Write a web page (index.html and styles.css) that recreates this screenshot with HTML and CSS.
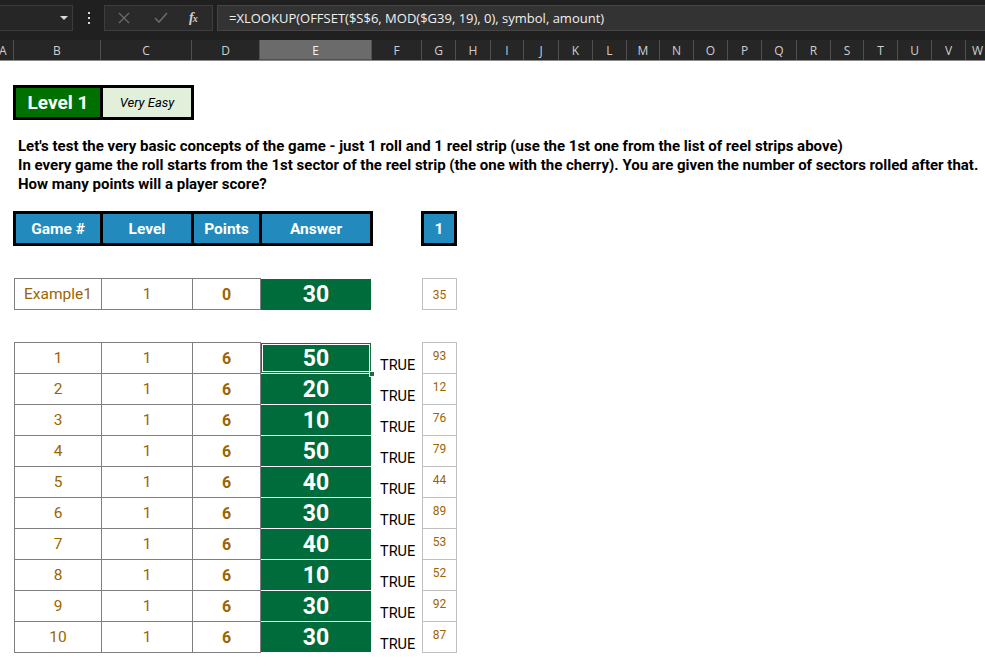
FILE: index.html
```html
<!DOCTYPE html>
<html>
<head>
<meta charset="utf-8">
<link rel="stylesheet" href="styles.css">
</head>
<body>
<div class="app">
  <div class="topbar">
    <div class="namebox"><span class="caret"></span></div>
    <div class="dots"><svg width="4" height="12" viewBox="0 0 4 12"><rect x="1" y="0" width="2" height="2" fill="#d8d8d8"/><rect x="1" y="5" width="2" height="2" fill="#d8d8d8"/><rect x="1" y="10" width="2" height="2" fill="#d8d8d8"/></svg></div>
    <div class="fxbox">
      <svg class="ic" width="14" height="14" viewBox="0 0 14 14"><path d="M2 2 L12 12 M12 2 L2 12" stroke="#6a6a6a" stroke-width="1.4" fill="none"/></svg>
      <svg class="ic" width="16" height="14" viewBox="0 0 16 14"><path d="M2 7 L6 11 L14 2" stroke="#6a6a6a" stroke-width="1.6" fill="none"/></svg>
      <span class="fx">f<sub>x</sub></span>
    </div>
    <div class="formula">=XLOOKUP(OFFSET($S$6, MOD($G39, 19), 0), symbol, amount)</div>
  </div>
  <div class="colheads">
    <span class="ch cha" style="width:14px">A</span>
    <span class="ch" style="width:87px">B</span>
    <span class="ch" style="width:91px">C</span>
    <span class="ch" style="width:68px">D</span>
    <span class="ch sel" style="width:112px">E</span>
    <span class="ch" style="width:50px">F</span>
    <span class="ch" style="width:34px">G</span>
    <span class="ch" style="width:35px">H</span>
    <span class="ch" style="width:33px">I</span>
    <span class="ch" style="width:35px">J</span>
    <span class="ch" style="width:34px">K</span>
    <span class="ch" style="width:34px">L</span>
    <span class="ch" style="width:33px">M</span>
    <span class="ch" style="width:34px">N</span>
    <span class="ch" style="width:34px">O</span>
    <span class="ch" style="width:34px">P</span>
    <span class="ch" style="width:35px">Q</span>
    <span class="ch" style="width:34px">R</span>
    <span class="ch" style="width:33px">S</span>
    <span class="ch" style="width:34px">T</span>
    <span class="ch" style="width:34px">U</span>
    <span class="ch" style="width:34px">V</span>
    <span class="ch chw" style="width:40px">W</span>
  </div>
  <div class="sheet">
    <div class="levelbox">
      <div class="lvl">Level 1</div>
      <div class="easy">Very Easy</div>
    </div>
    <p class="intro">Let's test the very basic concepts of the game - just 1 roll and 1 reel strip (use the 1st one from the list of reel strips above)<br>In every game the roll starts from the 1st sector of the reel strip (the one with the cherry). You are given the number of sectors rolled after that.<br>How many points will a player score?</p>
    <div class="headrow">
      <div class="hbox">
        <div class="hc w1">Game #</div>
        <div class="hc w2">Level</div>
        <div class="hc w3">Points</div>
        <div class="hc w4">Answer</div>
      </div>
      <div class="hbox one"><div class="hc w5">1</div></div>
    </div>
    <div class="exrow">
      <div class="grid ex">
        <div class="c b">Example1</div>
        <div class="c">1</div>
        <div class="c d bold">0</div>
        <div class="ans">30</div>
        <div class="tf"></div>
        <div class="g">35</div>
      </div>
    </div>
    <div class="grid data">
      <div class="c b">1</div><div class="c">1</div><div class="c d bold">6</div><div class="ans selcell">50<span class="handle"></span></div><div class="tf">TRUE</div><div class="g">93</div>
      <div class="c b">2</div><div class="c">1</div><div class="c d bold">6</div><div class="ans">20</div><div class="tf">TRUE</div><div class="g">12</div>
      <div class="c b">3</div><div class="c">1</div><div class="c d bold">6</div><div class="ans">10</div><div class="tf">TRUE</div><div class="g">76</div>
      <div class="c b">4</div><div class="c">1</div><div class="c d bold">6</div><div class="ans">50</div><div class="tf">TRUE</div><div class="g">79</div>
      <div class="c b">5</div><div class="c">1</div><div class="c d bold">6</div><div class="ans">40</div><div class="tf">TRUE</div><div class="g">44</div>
      <div class="c b">6</div><div class="c">1</div><div class="c d bold">6</div><div class="ans">30</div><div class="tf">TRUE</div><div class="g">89</div>
      <div class="c b">7</div><div class="c">1</div><div class="c d bold">6</div><div class="ans">40</div><div class="tf">TRUE</div><div class="g">53</div>
      <div class="c b">8</div><div class="c">1</div><div class="c d bold">6</div><div class="ans">10</div><div class="tf">TRUE</div><div class="g">52</div>
      <div class="c b">9</div><div class="c">1</div><div class="c d bold">6</div><div class="ans">30</div><div class="tf">TRUE</div><div class="g">92</div>
      <div class="c b">10</div><div class="c">1</div><div class="c d bold">6</div><div class="ans">30</div><div class="tf">TRUE</div><div class="g">87</div>
    </div>
  </div>
</div>
</body>
</html>
```
FILE: styles.css
```css
* { box-sizing: border-box; }
html, body { margin: 0; padding: 0; }
body { width: 985px; height: 666px; overflow: hidden; background: #fff; font-family: Roboto, "Liberation Sans", sans-serif; }
.app { width: 985px; height: 666px; overflow: hidden; }

.topbar { height: 40px; background: #202020; display: flex; align-items: flex-start; padding-top: 5px; }
.namebox { width: 73px; height: 26px; background: #262626; border: 1px solid #3b3b3b; border-left: none; position: relative; }
.caret { position: absolute; left: 60px; top: 10px; width: 0; height: 0; border-left: 4px solid transparent; border-right: 4px solid transparent; border-top: 4px solid #d8d8d8; }
.dots { width: 31px; height: 26px; display: flex; align-items: center; justify-content: center; }
.fxbox { width: 109px; height: 26px; background: #2a2a2a; border: 1px solid #3e3e3e; display: flex; align-items: center; padding-left: 12px; gap: 0; }
.fxbox .ic { margin-right: 22px; }
.fxbox .ic + .ic { margin-right: 20px; }
.fx { font-family: "Liberation Serif", serif; font-style: italic; font-weight: bold; color: #d0d0d0; font-size: 14px; }
.fx sub { font-size: 10px; vertical-align: 0; margin-left: -1px; }
.formula { flex: 1; margin-left: 4px; height: 26px; background: #333333; border: 1px solid #454545; border-right: none; color: #f0f0f0; font-family: "Open Sans", "Noto Sans", sans-serif; font-size: 13px; line-height: 24px; padding-left: 11px; white-space: nowrap; }

.colheads { height: 21px; background: #262626; display: flex; border-bottom: 1px solid #8a8a8a; overflow: hidden; }
.ch { flex: none; height: 20px; border-right: 1px solid #505050; color: #cfcfcf; font-family: "Open Sans", "Noto Sans", sans-serif; font-size: 12px; line-height: 22px; text-align: center; margin-top: 0; }
.cha { text-align: left; padding-left: 0; text-indent: -1px; }
.chw { text-align: left; padding-left: 6px; border-right: none; }
.ch.sel { background: #6b6b6b; border-bottom: 2px solid #1b6e3f; color: #f2f2f2; height: 21px; }

.sheet { padding-left: 13px; padding-top: 24px; }

.levelbox { display: flex; width: 181px; height: 35px; border: 3px solid #000; background: #000; gap: 3px; }
.lvl { width: 84px; background: #007000; color: #fff; font-weight: bold; font-size: 19px; display: flex; align-items: center; justify-content: center; }
.easy { width: 88px; background: #e2efda; color: #000; font-style: italic; font-size: 13px; display: flex; align-items: center; justify-content: center; }

.intro { margin: 17px 0 0 5px; font-weight: bold; font-size: 15px; line-height: 19px; color: #000; white-space: nowrap; }

.headrow { display: flex; margin-top: 17px; gap: 48px; }
.hbox { display: flex; height: 35px; border: 3px solid #000; background: #000; gap: 3px; }
.hc { background: #228abc; color: #fff; font-weight: bold; font-size: 15.5px; display: flex; align-items: center; justify-content: center; }
.w1 { width: 84px; } .w2 { width: 88px; } .w3 { width: 65px; } .w4 { width: 108px; } .w5 { width: 30px; }

.grid { display: grid; grid-template-columns: 88px 91px 68px 111px 50px 35px; margin-left: 1px; }
.exrow { margin-top: 32px; }
.data { margin-top: 32px; }
.c { height: 31px; border-right: 1px solid #7f7f7f; border-bottom: 1px solid #7f7f7f; color: #9c6500; font-size: 15.5px; display: flex; align-items: center; justify-content: center; }
.c.b { border-left: 1px solid #7f7f7f; }
.grid > .c:nth-child(-n+3) { border-top: 1px solid #7f7f7f; height: 32px; }
.ex .c { height: 32px; }
.bold { font-weight: bold; font-size: 16px; }
.ans { height: 31px; background: #006c3b; color: #fff; font-weight: bold; font-size: 23px; display: flex; align-items: center; justify-content: center; border-bottom: 1px solid #fff; margin-right: 1px; }
.data > .ans:nth-child(4) { height: 32px; border-top: 1px solid #fff; }
.ex .ans { height: 31px; border-bottom: none; margin-top: 1px; }
.tf { font-size: 14.5px; color: #000; display: flex; align-items: flex-end; padding-left: 8px; padding-bottom: 0; }
.g { border: 1px solid #c0c0c0; border-top: none; color: #9c6500; font-size: 12px; display: flex; justify-content: center; padding-top: 6px; }
.data > .g:nth-child(6), .ex .g { border-top: 1px solid #c0c0c0; }
.ex .g { padding-top: 9px; height: 32px; }
.selcell { position: relative; box-shadow: inset 0 0 0 1px #1d6b3e, inset 0 0 0 2px #fff; }
.data > .selcell { border-top: 1px solid #1d6b3e; }
.handle { position: absolute; right: -4px; bottom: -4px; width: 6px; height: 6px; background: #1d6b3e; border: 1px solid #fff; }
```
